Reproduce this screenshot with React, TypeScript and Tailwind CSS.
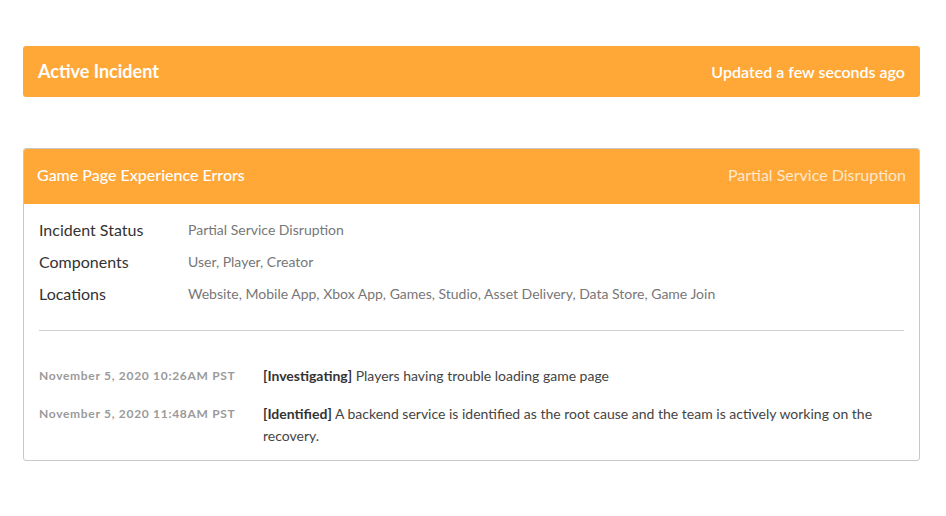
import React from 'react';

const details = [
  { label: 'Incident Status', value: 'Partial Service Disruption' },
  { label: 'Components', value: 'User, Player, Creator' },
  { label: 'Locations', value: 'Website, Mobile App, Xbox App, Games, Studio, Asset Delivery, Data Store, Game Join' },
];

const updates = [
  {
    time: 'November 5, 2020 10:26AM PST',
    status: 'Investigating',
    text: 'Players having trouble loading game page',
  },
  {
    time: 'November 5, 2020 11:48AM PST',
    status: 'Identified',
    text: 'A backend service is identified as the root cause and the team is actively working on the recovery.',
  },
];

const App: React.FC = () => {
  return (
    <div className="min-h-screen bg-white font-['Lato','Liberation_Sans',sans-serif] pt-[46px]">
      <div className="ml-[23px] w-[897px]">
        {/* Banner */}
        <div className="h-[51px] rounded-[3px] bg-[#ffa838] flex items-center justify-between px-[15px] text-white">
          <span className="text-[18px] font-bold">Active Incident</span>
          <span className="text-[16px] font-semibold">Updated a few seconds ago</span>
        </div>

        {/* Incident card */}
        <div className="mt-[51px] rounded-[3px] border border-[#c8c8c8] overflow-hidden">
          <div className="h-[56px] bg-[#ffa838] flex items-center justify-between px-[14px] pb-[2px] -mx-px -mt-px">
            <span className="text-[16px] font-medium text-white">Game Page Experience Errors</span>
            <span className="text-[16px] text-white/75">Partial Service Disruption</span>
          </div>

          <div className="px-[15px] pt-[10px] pb-[13px]">
            <div className="flex flex-col">
              {details.map((d) => (
                <div key={d.label} className="flex items-center h-[32px]">
                  <span className="w-[149px] text-[16px] text-[#333]">{d.label}</span>
                  <span className="text-[14px] text-[#777] -mt-[2px]">{d.value}</span>
                </div>
              ))}
            </div>

            <div className="mt-[20px] border-t border-[#d0d0d0]" />

            <div className="mt-[34px] flex flex-col gap-[16px]">
              {updates.map((u) => (
                <div key={u.time} className="flex">
                  <span className="w-[224px] shrink-0 text-[12px] tracking-[0.7px] font-bold text-[#9a9a9a] leading-[22px]">{u.time}</span>
                  <p className="text-[14px] text-[#444] leading-[22px]">
                    <span className="font-bold text-[#333]">[{u.status}]</span> {u.text}
                  </p>
                </div>
              ))}
            </div>
          </div>
        </div>
      </div>
    </div>
  );
};

export default App;
